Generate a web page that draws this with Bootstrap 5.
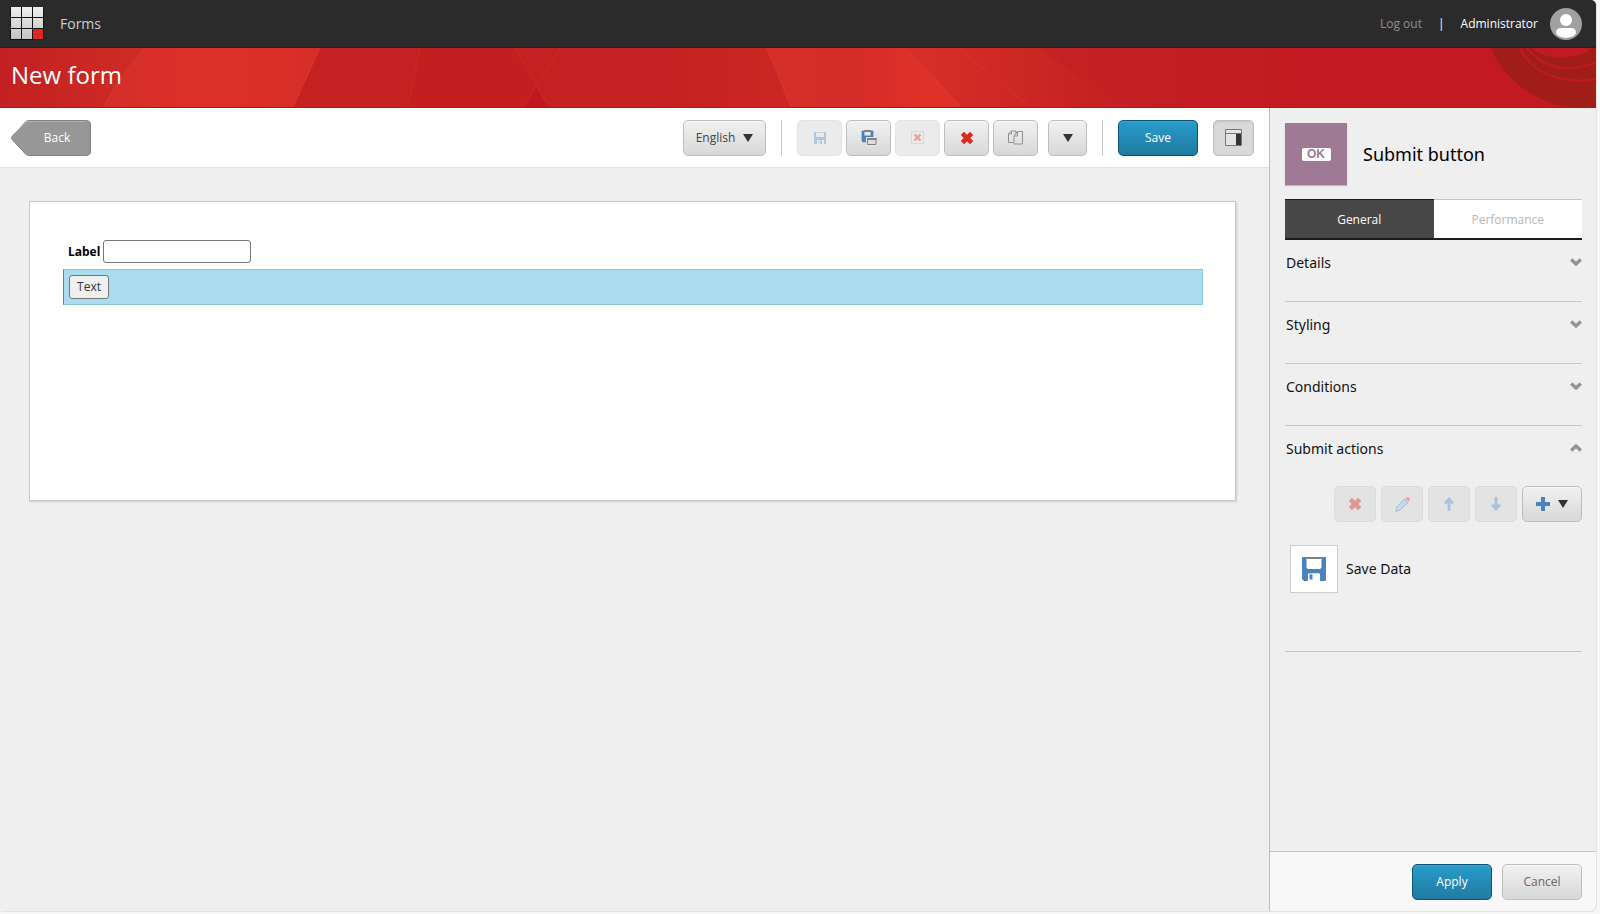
<!DOCTYPE html>
<html lang="en">
<head>
<meta charset="utf-8">
<meta name="viewport" content="width=device-width, initial-scale=1">
<title>New form - Forms</title>
<link href="https://cdn.jsdelivr.net/npm/bootstrap@5.3.0/dist/css/bootstrap.min.css" rel="stylesheet">
<style>
  body { font-family: "Open Sans", "Noto Sans", sans-serif; font-size: 12px; line-height: 20px; color: #111; background: #f7f7f7; padding: 0 4px 3px 0; }
  .app-frame { background: #efefef; border-radius: 0 5px 7px 0; overflow: hidden; min-height: calc(100vh - 3px); box-shadow: 1px 1px 0 #e2e2e2; }
  .top-bar { background: #2b2b2b; height: 48px; border-bottom: 1px solid #17242a; padding: 0 14px 0 10px; }
  .top-bar a { text-decoration: none; }
  .app-name { color: #cfcfcf; font-size: 14px; }
  .logout { color: #8f8f8f; }
  .banner { height: 60px; background: #c52022; border-bottom: 1px solid #c80a08; padding: 0 11px; }
  .banner svg { z-index: 0; }
  .banner h1 { font-size: 24px; line-height: 54px; color: #fff; z-index: 1; font-weight: 400; }
  .tool-row { background: #fff; border-bottom: 1px solid #e4e4e4; height: 60px; padding: 0 15px 0 11px; }
  .side { width: 327px; border-left: 1px solid #bdbdbd; }
  .ui-btn { height: 36px; border: 1px solid #bdbdbd; border-radius: 5px; padding: 0; font-size: 12px; line-height: 20px; color: #444; background: linear-gradient(#f1f1f1, #d8d8d8); box-shadow: inset 0 1px 0 #f8f8f8; display: inline-flex; align-items: center; justify-content: center; }
  .ui-btn:disabled { background: #ebebeb; border-color: #e3e3e3; box-shadow: none; opacity: 1; }
  .side .ui-btn:disabled { background: #e3e3e3; border-color: #dadada; }
  .ui-btn.blue { color: #fff; border-color: #0d5474; background: linear-gradient(#289bcb, #217ba1); box-shadow: inset 0 1px 0 #3aa5d1; }
  .ui-btn.pressed { background: #d9d9d9; border-color: #bdbdbd; box-shadow: inset 0 1px 2px #c4c4c4; }
  .ui-btn.quiet { color: #666; }
  .w-icon { width: 45px; } .w-small { width: 41px; } .w-text { width: 80px; } .w-lang { width: 83px; } .w-drop { width: 39px; } .w-act { width: 42px; } .w-add { width: 60px; }
  .sep { width: 1px; height: 36px; background: #c9c9c9; margin: 0 15px; }
  .tools { gap: 4px; }
  .tool-more { margin-left: 10px; }
  .tool-panel { margin-left: 15px; }
  .back { width: 80px; height: 36px; border: 0; padding: 0 0 0 12px; background: none; color: #fff; }
  .back span { position: relative; }
  .canvas { padding: 33px 33px 0 29px; }
  .sheet { background: #fff; border: 1px solid #c8c8c8; min-height: 300px; padding: 38px 32px 0 33px; box-shadow: 1px 1px 2px #ccc; }
  .form-line { padding: 0 5px; gap: 3px; }
  .form-line label { font-size: 12px; font-weight: 700; color: #000; }
  .field { width: 148px; height: 23px; border: 1px solid #767676; border-radius: 3px; }
  .picked { margin-top: 6px; height: 36px; background: #abdbef; border: 1px solid #86c3df; border-left-color: #1f9ccc; }
  .plain-btn { width: 40px; height: 24px; border: 1px solid #767676; border-radius: 3px; background: #efefef; padding: 0; line-height: 20px; color: #333; }
  .side-body { padding: 15px 14px 0 15px; }
  .kind { width: 62px; height: 62px; background: #9f7a94; box-shadow: 0 1px 1px #bbb; }
  .ok { width: 29px; height: 13px; border-radius: 2px; background: #fff; color: #9f7a94; font: 700 12px/13px "Liberation Sans", sans-serif; text-align: center; }
  .kind-name { font-family: "Noto Sans", sans-serif; font-size: 18px; line-height: 24px; color: #000; font-weight: 400; }
  .tabs { height: 41px; margin-top: 14px; }
  .tabs button { border: 0; border-top: 1px solid #c4c4c4; border-bottom: 2px solid #1c1c1c; background: #fff; color: #b8b8b8; padding: 2px 0 0; }
  .tabs .active { background: #474747; color: #fff; border-top-color: #1c1c1c; }
  .fold { height: 62px; border: 0; border-bottom: 1px solid #c8c8c8; background: none; padding: 13px 0 0 1px; }
  .fold.open { border: 0; height: 60px; }
  .fold, .item-name { font-family: "Noto Sans", sans-serif; font-size: 14px; line-height: 20px; color: #111; text-align: left; }
  .fold svg { margin-top: 5px; }
  .actions { gap: 5px; }
  .action-list { padding: 23px 5px 58px; border-bottom: 1px solid #c4c4c4; }
  .thumb { width: 48px; height: 48px; background: #fff; border: 1px solid #ccc; }
  .side-foot { background: #f8f8f8; border-top: 1px solid #c4c4c4; height: 60px; padding: 0 14px; gap: 10px; }
</style>
</head>
<body>
<svg class="d-none">
  <symbol id="tri" viewBox="0 0 10 8"><path d="M0 0h10L5 8z" fill="#333"/></symbol>
  <symbol id="disk" viewBox="0 0 24 24"><path d="M1 0h22q1 0 1 1v22q0 1-1 1h-5v-7.500H10V24H2l-2-2V1q0-1 1-1zM4.500 1.500V10q0 2 2 2h11q2 0 2-2V1.500z" fill="#4a82ba" fill-rule="evenodd"/><path d="M5 0h14v2H5z" fill="#808080"/><path d="M6 16.500h11V24H6z" fill="#fff"/><path d="M7.500 17.500h3v5h-3z" fill="#4a82ba"/></symbol>
  <symbol id="disk-small" viewBox="0 0 12 12"><path d="M0 0h2v5h8V0h2v12h-2V8H8v4H6V8H3v4H1l-1-1z" fill="#4a82ba"/><path d="M2 0h8v1H2z" fill="#999"/><path d="M4 9h1v2H4z" fill="#4a82ba"/></symbol>
  <symbol id="cross" viewBox="0 0 12 12"><path d="M3 0l3 3 3-3 3 3-3 3 3 3-3 3-3-3-3 3-3-3 3-3-3-3z" fill="#dd291e" stroke="#dd291e" stroke-width=".5" stroke-linejoin="round"/></symbol>
  <symbol id="chev" viewBox="0 0 12 8"><path d="M1.200 1.500L6 6l4.800-4.500" fill="none" stroke="#949494" stroke-width="3.400"/></symbol>
  <symbol id="arrow" viewBox="0 0 10 14"><path d="M5 14V2M1 6.500L5 2l4 4.500" fill="none" stroke="#a9c3de" stroke-width="2.800"/></symbol>
</svg>

<div class="app-frame d-flex flex-column">
  <header class="top-bar d-flex align-items-center">
    <a href="#" aria-label="Home"><svg class="d-block" width="34" height="34" viewBox="0 1 34 34">
      <defs><linearGradient id="g" x1="0" y1="0" x2="0" y2="34" gradientUnits="userSpaceOnUse"><stop stop-color="#f2f2f2"/><stop offset="1" stop-color="#c2c2c2"/></linearGradient></defs>
      <path d="M0 1h34v33H0z" fill="#111"/><path d="M1 1h10v10H1zM12 1h10v10H12zM23 1h10v10H23zM1 12h10v10H1zM12 12h10v10H12zM23 12h10v10H23zM1 23h10v10H1zM12 23h10v10H12z" fill="url(#g)"/><path d="M23 23h10v10H23z" fill="#dd291e"/></svg></a>
    <a href="#" class="app-name ms-3">Forms</a>
    <a href="#" class="logout ms-auto">Log out</a>
    <span class="text-white mx-3">|</span>
    <a href="#" class="text-white">Administrator</a>
    <svg class="avatar ms-2 ps-1" width="36" height="32" viewBox="0 0 32 32"><circle cx="16" cy="16" r="16" fill="#a0a0a0"/><circle cx="16" cy="12" r="6" fill="#fff"/><path d="M11 20h10q5 0 5 5-1 4-10 5-9-1-10-5 0-5 5-5z" fill="#fff"/></svg>
  </header>

  <div class="banner position-relative">
    <svg class="position-absolute top-0 start-0 w-100 h-100" viewBox="0 0 1596 58" preserveAspectRatio="none" aria-hidden="true">
      <defs>
        <linearGradient id="b0"><stop stop-color="#c22022"/><stop offset="1" stop-color="#cf2b27"/></linearGradient>
        <linearGradient id="b1"><stop stop-color="#d52e28"/><stop offset=".5" stop-color="#dc3128"/><stop offset="1" stop-color="#d62e27"/></linearGradient>
        <linearGradient id="bm"><stop stop-color="#c52022"/><stop offset="1" stop-color="#cc2624"/></linearGradient>
        <linearGradient id="b2"><stop stop-color="#d53028"/><stop offset=".45" stop-color="#d42c27"/><stop offset=".8" stop-color="#df3127"/></linearGradient>
        <linearGradient id="b3"><stop stop-color="#d83028"/><stop offset="1" stop-color="#c42022"/></linearGradient>
        <linearGradient id="b4"><stop stop-color="#c52223"/><stop offset=".5" stop-color="#c21a20"/></linearGradient>
      </defs>
      <path d="M0 0H145Q122 26 103 58H0z" fill="url(#b0)"/>
      <path d="M145 0H320L293 58H103Q122 26 145 0z" fill="url(#b1)"/>
      <path d="M420 0H515L536 38 523 58H408z" fill="#c41e21"/>
      <path d="M536 38L549 58H523z" fill="#bf181e"/>
      <path d="M640 0H767L791 58H640z" fill="url(#bm)"/>
      <path d="M767 0H903Q934 28 961 58H791z" fill="url(#b2)"/>
      <path d="M903 0H1040L1120 58H961Q934 28 903 0z" fill="url(#b3)"/>
      <path d="M1040 0H1596V58H1120z" fill="url(#b4)"/>
      <g fill="none" stroke="#e04a35" opacity=".45"><path d="M145 0Q122 26 103 58M320 0L293 58M767 0L791 58M903 0Q934 28 961 58"/><path d="M420 0L408 58M515 0L549 58M560 0L523 58M958 0L1030 58" opacity=".6"/></g>
      <path d="M1491 0C1499 20 1526 54 1572 58H1596V0z" fill="#a01e17"/>
      <path d="M1532 0C1545 12 1575 14 1592 0z" fill="#c21a20"/>
      <path d="M1562 9Q1580 9 1596 1V6Q1578 13 1562 9z" fill="#a01e17"/>
      <path d="M1520 0C1532 26 1562 35 1596 31M1527 0C1545 22 1572 24 1596 14" fill="none" stroke="#c21a20" stroke-width="2"/>
    </svg>
    <h1 class="position-relative m-0">New form</h1>
  </div>

  <div class="d-flex flex-grow-1">
    <main class="flex-grow-1">
      <div class="tool-row d-flex align-items-center">
        <button class="back position-relative me-auto"><svg class="position-absolute top-0 start-0" width="80" height="36" viewBox="0 0 80 36"><path d="M17.500.5H75q4.500 0 4.500 4.500v26q0 4.500-4.500 4.500H17.500q-1.500 0-3-1.500L1 19.500q-1-1.500 0-3L14.500 2q1.500-1.500 3-1.500z" fill="#979797" stroke="#828282"/><path d="M4 13L15 2.500q1-1 3-1H75" fill="none" stroke="#b0b0b0"/></svg><span>Back</span></button>
        <button class="ui-btn w-lang">English<svg class="ms-2" width="10" height="8"><use href="#tri"/></svg></button>
        <div class="sep"></div>
        <div class="tools d-flex">
          <button class="ui-btn w-icon" disabled aria-label="Save item"><svg width="12" height="12" opacity=".35"><use href="#disk-small"/></svg></button>
          <button class="ui-btn w-icon" aria-label="Save as"><svg width="16" height="16" viewBox="0 0 16 16"><path d="M1 1h2v5h7V1h2v6H6v5H3.500V9H3v3H2l-1-1z" fill="#4a82ba" stroke="#4a82ba" stroke-width=".8"/><path d="M3 1h7" stroke="#808080" stroke-width="2"/><path d="M5 7h11v9H5z" fill="#e6e6e6"/><path d="M6.500 8.500h8.500v6H6.500z" fill="#ddd" stroke="#808080"/><path d="M6 9h9.500" stroke="#808080" stroke-width="2"/></svg></button>
          <button class="ui-btn w-icon" disabled aria-label="Clear"><svg width="13" height="13" viewBox="0 0 13 13"><path d="M.5.5h12v12H.5z" fill="none" stroke="#c3c3c3" stroke-dasharray="1 1"/><path d="M3.500 3.500l6 6m0-6l-6 6" stroke="#f09a96" stroke-width="2.400"/></svg></button>
          <button class="ui-btn w-icon" aria-label="Delete"><svg width="12" height="12"><use href="#cross"/></svg></button>
          <button class="ui-btn w-icon" aria-label="Copy"><svg width="15" height="15" viewBox="0 0 15 15"><path d="M5 12.500H.5v-9l3-2.500H8v3" fill="none" stroke="#8f8f8f"/><path d="M9.500 1.500h5v12.500H6V5.500zM9.500 2v4H6M3.500 1.500V4H1" fill="none" stroke="#8f8f8f"/></svg></button>
        </div>
        <button class="ui-btn w-drop tool-more" aria-label="More"><svg width="10" height="8"><use href="#tri"/></svg></button>
        <div class="sep"></div>
        <button class="ui-btn blue w-text">Save</button>
        <button class="ui-btn pressed w-small tool-panel" aria-label="Toggle panel"><svg width="17" height="17" viewBox="0 0 17 17"><path d="M.5.5h16v16H.5zM1 4.500h15" fill="#e4e4e4" stroke="#777"/><path d="M11 5h5v11h-5z" fill="#333"/></svg></button>
      </div>
      <div class="canvas">
        <div class="sheet">
          <div class="form-line d-flex align-items-center"><label for="f1">Label</label><input id="f1" class="field" type="text"></div>
          <div class="picked form-line d-flex align-items-center"><button class="plain-btn">Text</button></div>
        </div>
      </div>
    </main>

    <aside class="side d-flex flex-column flex-shrink-0">
      <div class="side-body flex-grow-1">
        <div class="d-flex align-items-center">
          <div class="kind d-flex align-items-center justify-content-center"><span class="ok">OK</span></div>
          <h2 class="kind-name m-0 ps-3">Submit button</h2>
        </div>
        <div class="tabs d-flex" role="tablist">
          <button class="active w-50" role="tab">General</button><button class="w-50" role="tab">Performance</button>
        </div>
        <button class="fold w-100 d-flex justify-content-between align-items-start">Details<svg width="12" height="8"><use href="#chev"/></svg></button>
        <button class="fold w-100 d-flex justify-content-between align-items-start">Styling<svg width="12" height="8"><use href="#chev"/></svg></button>
        <button class="fold w-100 d-flex justify-content-between align-items-start">Conditions<svg width="12" height="8"><use href="#chev"/></svg></button>
        <button class="fold open w-100 d-flex justify-content-between align-items-start">Submit actions<svg width="12" height="8" viewBox="0 0 12 8"><path d="M1.200 6.500L6 2l4.800 4.500" fill="none" stroke="#949494" stroke-width="3.400"/></svg></button>
        <div class="actions d-flex justify-content-end">
          <button class="ui-btn w-act" disabled aria-label="Remove"><svg width="12" height="12" opacity=".4"><use href="#cross"/></svg></button>
          <button class="ui-btn w-act" disabled aria-label="Edit"><svg width="15" height="15" viewBox="0 0 15 15"><path d="M1 14l1-4 7.500-7.500 3 3L5 13z" fill="#dbe5ef" stroke="#a9c3de" stroke-width="1.300"/><path d="M3.500 11.500L11 4" stroke="#a9c3de"/><path d="M10.500 1.500l1-1q2-.5 3 1t-.5 2.500l-.5.5z" fill="#ea9c98"/></svg></button>
          <button class="ui-btn w-act" disabled aria-label="Move up"><svg width="10" height="14"><use href="#arrow"/></svg></button>
          <button class="ui-btn w-act" disabled aria-label="Move down"><svg width="10" height="14" viewBox="0 0 10 14"><path d="M5 0v12M1 7.500L5 12l4-4.500" fill="none" stroke="#a9c3de" stroke-width="2.800"/></svg></button>
          <button class="ui-btn w-add" aria-label="Add"><svg width="14" height="14" viewBox="0 0 14 14"><path d="M7 0v14M0 7h14" stroke="#4a82ba" stroke-width="4"/></svg><svg class="ms-2" width="10" height="8"><use href="#tri"/></svg></button>
        </div>
        <div class="action-list d-flex align-items-center">
          <div class="thumb d-flex align-items-center justify-content-center"><svg width="24" height="24"><use href="#disk"/></svg></div>
          <span class="item-name ms-2">Save Data</span>
        </div>
      </div>
      <div class="side-foot d-flex align-items-center justify-content-end">
        <button class="ui-btn blue w-text">Apply</button>
        <button class="ui-btn quiet w-text">Cancel</button>
      </div>
    </aside>
  </div>
</div>
<script src="https://cdn.jsdelivr.net/npm/bootstrap@5.3.0/dist/js/bootstrap.bundle.min.js"></script>
</body>
</html>
